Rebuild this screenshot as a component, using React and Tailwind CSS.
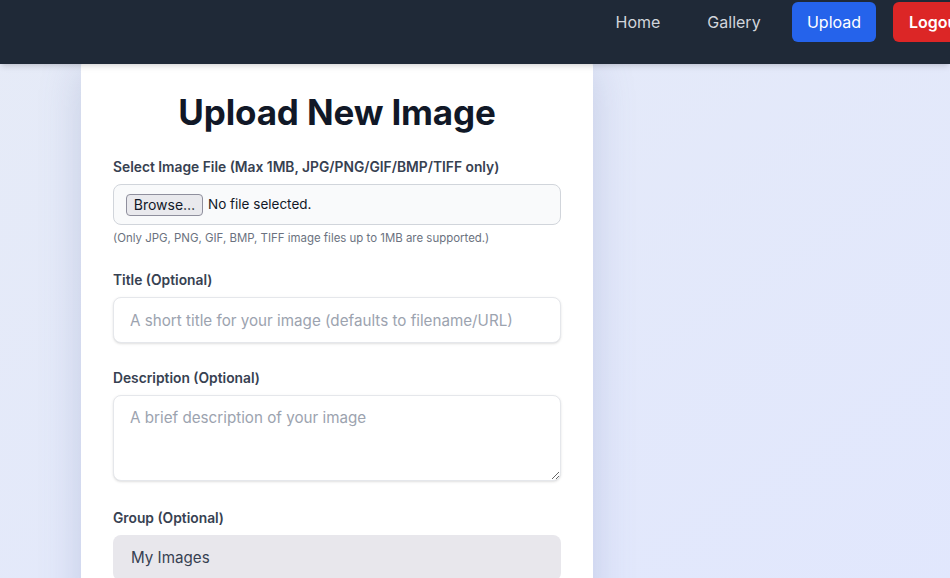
import { useState } from 'react';

const NavLink = ({ children, width }) => (
  <a href="#" className={`shrink-0 rounded-md py-2 text-center text-base text-gray-300 hover:text-white ${width}`}>
    {children}
  </a>
);

const App = () => {
  const [title, setTitle] = useState('');
  const [description, setDescription] = useState('');
  const [group, setGroup] = useState('mine');

  return (
    <div className="min-h-screen overflow-hidden bg-gradient-to-br from-[#e6ebf7] to-[#e1e7fd] font-['Inter','Liberation_Sans',sans-serif]">
      <header className="relative z-10 h-16 bg-[#1f2937] shadow-md">
        <nav className="flex items-start gap-4 pt-[2px] pl-[600px]">
          <NavLink width="w-[76px]">Home</NavLink>
          <NavLink width="w-[84px]">Gallery</NavLink>
          <a href="#" className="w-[84px] shrink-0 rounded-md bg-[#2563eb] py-2 text-center text-base text-white">Upload</a>
          <button type="button" className="ml-px shrink-0 rounded-md bg-[#dc2626] px-4 py-2 text-base font-semibold text-white">Logout</button>
        </nav>
      </header>

      <main className="-mt-[6px] pl-[81px]">
        <div className="w-[512px] rounded-lg bg-white px-8 pt-[34px] pb-8 shadow-[0_10px_40px_rgba(100,116,170,0.25)]">
          <h1 className="mb-6 text-center text-[35px] leading-10 font-bold tracking-[-0.15px] text-[#111827]">Upload New Image</h1>

          <div className="mb-6">
            <label className="mb-2 block pt-px text-[13.8px] leading-5 font-semibold text-[#374151]">Select Image File (Max 1MB, JPG/PNG/GIF/BMP/TIFF only)</label>
            <label className="-mt-px flex h-[41px] cursor-pointer items-center rounded-lg border border-[#d1d5db] bg-[#f9fafb] px-3 text-[13.5px] text-[#111827]">
              <input type="file" accept="image/*" className="hidden" />
              <span className="mr-[5px] flex h-[22px] w-[77px] items-center justify-center rounded-[4px] border border-[#8f8f9d] bg-[#e9e9ed] text-[14px]">Browse…</span>
              <span>No file selected.</span>
            </label>
            <p className="mt-[5px] text-[11.45px] leading-4 text-[#6b7280]">(Only JPG, PNG, GIF, BMP, TIFF image files up to 1MB are supported.)</p>
          </div>

          <div className="mb-[25px]">
            <label className="mb-[7px] block text-[13.8px] leading-5 font-semibold text-[#374151]">Title (Optional)</label>
            <input
              type="text"
              value={title}
              onChange={(e) => setTitle(e.target.value)}
              placeholder="A short title for your image (defaults to filename/URL)"
              className="block h-[46px] w-full rounded-lg border border-[#e5e7eb] bg-white px-4 text-[15.2px] text-[#374151] shadow-sm placeholder:text-[#9ca3af] focus:outline-none"
            />
          </div>

          <div className="mb-[27px]">
            <label className="mb-[7px] block text-[13.8px] leading-5 font-semibold text-[#374151]">Description (Optional)</label>
            <textarea
              value={description}
              onChange={(e) => setDescription(e.target.value)}
              placeholder="A brief description of your image"
              className="block h-[86px] w-full rounded-lg border border-[#e5e7eb] bg-white px-4 py-2.5 text-[15.2px] leading-6 text-[#374151] shadow-sm placeholder:text-[#9ca3af] focus:outline-none"
            />
          </div>

          <div>
            <label className="mb-[7px] block text-[13.8px] leading-5 font-semibold text-[#374151]">Group (Optional)</label>
            <select
              value={group}
              onChange={(e) => setGroup(e.target.value)}
              className="block h-[46px] w-full appearance-none rounded-lg bg-[#e8e7ec] pr-4 pl-[18px] text-[15.2px] text-[#374151] focus:outline-none"
            >
              <option value="mine">My Images</option>
            </select>
          </div>
        </div>
      </main>
    </div>
  );
};

export default App;
